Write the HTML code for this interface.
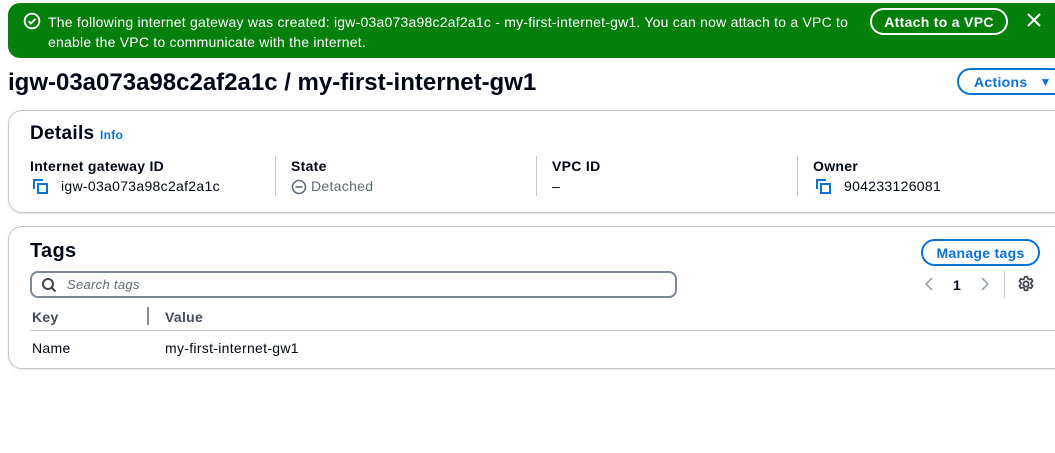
<!DOCTYPE html>
<html><head><style>
*{box-sizing:border-box;margin:0;padding:0}
body{width:1055px;height:453px;background:#fff;font-family:"Liberation Sans",sans-serif;color:#000716;position:relative;overflow:hidden;font-size:14px;letter-spacing:0.3px}
.a{position:absolute;white-space:nowrap}
.b{font-weight:bold}
.btn{position:absolute;border:2px solid #0972d3;border-radius:16px;color:#0972d3;font-weight:bold;font-size:14px;display:flex;align-items:center;justify-content:center;background:#fff}
.card{position:absolute;border:1px solid #c6c6cd;border-radius:14px;box-shadow:0 1px 2px rgba(0,7,22,.1)}
.vd{position:absolute;width:1px;background:#c6c6cd}
</style></head><body>
<div class="a" style="left:8px;top:3px;width:1060px;height:55px;background:#037f0c;border-radius:12px"></div>
<svg class="a" style="left:23px;top:12px" width="18" height="18" viewBox="0 0 16 16"><circle cx="8" cy="8" r="6.5" fill="none" stroke="#fff" stroke-width="1.7"/><path d="M5 8.2l2 2 4-4" fill="none" stroke="#fff" stroke-width="1.7"/></svg>
<div class="a" style="left:48px;top:12px;color:#fff;font-size:14px;line-height:20px;letter-spacing:0.22px">The following internet gateway was created: igw-03a073a98c2af2a1c - my-first-internet-gw1. You can now attach to a VPC to<br>enable the VPC to communicate with the internet.</div>
<div class="btn" style="left:870px;top:8px;width:138px;height:27px;border-color:#fff;color:#fff;background:transparent">Attach to a VPC</div>
<svg class="a" style="left:1027px;top:13px" width="14" height="14" viewBox="0 0 14 14"><path d="M1 1l12 12M13 1L1 13" stroke="#fff" stroke-width="2"/></svg>
<div class="a b" style="left:8px;top:69px;font-size:24px;line-height:28px;letter-spacing:0">igw-03a073a98c2af2a1c / my-first-internet-gw1</div>
<div class="btn" style="left:957px;top:68px;width:110px;height:27px;justify-content:flex-start;padding-left:15px">Actions <span style="margin-left:12px;font-size:12px">▼</span></div>
<div class="card" style="left:8px;top:110px;width:1060px;height:103px"></div>
<div class="a b" style="left:30px;top:123px;font-size:19px">Details <span style="font-size:12px;color:#0972d3">Info</span></div>
<div class="vd" style="left:275px;top:156px;height:40px"></div>
<div class="vd" style="left:536px;top:156px;height:40px"></div>
<div class="vd" style="left:797px;top:156px;height:40px"></div>
<div class="a b" style="left:30px;top:158px">Internet gateway ID</div>
<div class="a b" style="left:291px;top:158px">State</div>
<div class="a b" style="left:552px;top:158px">VPC ID</div>
<div class="a b" style="left:813px;top:158px">Owner</div>
<svg class="a" style="left:33px;top:179px" width="16" height="16" viewBox="0 0 16 16"><path d="M1 10V1h9" fill="none" stroke="#0972d3" stroke-width="2"/><rect x="5" y="5" width="9" height="9" fill="none" stroke="#0972d3" stroke-width="2"/></svg>
<div class="a" style="left:61px;top:178px;color:#000716">igw-03a073a98c2af2a1c</div>
<svg class="a" style="left:291px;top:179px" width="16" height="16" viewBox="0 0 16 16"><circle cx="8" cy="8" r="6.5" fill="none" stroke="#5f6b7a" stroke-width="1.6"/><path d="M4.5 8h7" stroke="#5f6b7a" stroke-width="1.6"/></svg>
<div class="a" style="left:311px;top:178px;color:#5f6b7a">Detached</div>
<div class="a" style="left:552px;top:178px">–</div>
<svg class="a" style="left:816px;top:179px" width="16" height="16" viewBox="0 0 16 16"><path d="M1 10V1h9" fill="none" stroke="#0972d3" stroke-width="2"/><rect x="5" y="5" width="9" height="9" fill="none" stroke="#0972d3" stroke-width="2"/></svg>
<div class="a" style="left:844px;top:178px">904233126081</div>
<div class="card" style="left:8px;top:226px;width:1060px;height:143px"></div>
<div class="a b" style="left:30px;top:240px;font-size:20px">Tags</div>
<div class="btn" style="left:921px;top:239px;width:119px;height:27px">Manage tags</div>
<div class="a" style="left:30px;top:271px;width:647px;height:27px;border:2px solid #7d8998;border-radius:8px"></div>
<svg class="a" style="left:41px;top:277px" width="16" height="16" viewBox="0 0 16 16"><circle cx="7" cy="7" r="5" fill="none" stroke="#424650" stroke-width="2"/><path d="M10.5 10.5l4 4" stroke="#424650" stroke-width="2"/></svg>
<div class="a" style="left:67px;top:277px;font-style:italic;color:#5f6b7a;font-size:13px">Search tags</div>
<svg class="a" style="left:924px;top:277px" width="10" height="14" viewBox="0 0 10 14"><path d="M8 1L2 7l6 6" fill="none" stroke="#9ba7b6" stroke-width="1.6"/></svg>
<div class="a b" style="left:953px;top:277px">1</div>
<svg class="a" style="left:980px;top:277px" width="10" height="14" viewBox="0 0 10 14"><path d="M2 1l6 6-6 6" fill="none" stroke="#9ba7b6" stroke-width="1.6"/></svg>
<div class="vd" style="left:1004px;top:271px;height:27px"></div>
<svg class="a" style="left:1017px;top:275px" width="18" height="18" viewBox="0 0 16 16"><circle cx="8" cy="8" r="2.3" fill="none" stroke="#424650" stroke-width="1.6"/><path d="M6.8 1.5h2.4l.4 1.9 1.3.7 1.8-.7 1.2 2.1-1.4 1.3v1.5l1.4 1.3-1.2 2.1-1.8-.7-1.3.7-.4 1.9H6.8l-.4-1.9-1.3-.7-1.8.7-1.2-2.1 1.4-1.3V6.8L2.1 5.5l1.2-2.1 1.8.7 1.3-.7z" fill="none" stroke="#424650" stroke-width="1.5" stroke-linejoin="round"/></svg>
<div class="a b" style="left:32px;top:309px;color:#414d5c">Key</div>
<div class="vd" style="left:147px;top:307px;height:18px;width:2px;background:#8c8c94"></div>
<div class="a b" style="left:165px;top:309px;color:#414d5c">Value</div>
<div class="a" style="left:30px;top:330px;width:1030px;height:1px;background:#c6c6cd"></div>
<div class="a" style="left:32px;top:340px">Name</div>
<div class="a" style="left:165px;top:340px">my-first-internet-gw1</div>
</body></html>
